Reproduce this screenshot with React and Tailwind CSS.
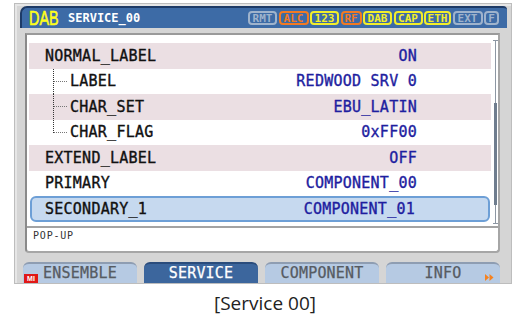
import React from "react";

const MONO = { fontFamily: '"DejaVu Sans Mono", "Liberation Mono", monospace' };

const rows = [
  { label: "NORMAL_LABEL", value: "ON", pink: true },
  { label: "LABEL", value: "REDWOOD SRV 0", child: "mid" },
  { label: "CHAR_SET", value: "EBU_LATIN", pink: true, child: "mid" },
  { label: "CHAR_FLAG", value: "0xFF00", child: "last" },
  { label: "EXTEND_LABEL", value: "OFF", pink: true },
  { label: "PRIMARY", value: "COMPONENT_00" },
  { label: "SECONDARY_1", value: "COMPONENT_01", selected: true },
];

const badges = [
  { t: "RMT", c: "#9fb3cc", w: 29 },
  { t: "ALC", c: "#f27a22", w: 30 },
  { t: "123", c: "#f2ee2a", w: 29 },
  { t: "RF", c: "#f27a22", w: 21 },
  { t: "DAB", c: "#f2ee2a", w: 29 },
  { t: "CAP", c: "#f2ee2a", w: 29 },
  { t: "ETH", c: "#f2ee2a", w: 27 },
  { t: "EXT", c: "#9fb3cc", w: 30 },
  { t: "F", c: "#9fb3cc", w: 15 },
];

function Tree({ kind }) {
  return (
    <svg width="17" height="25.5" className="shrink-0 block">
      <line
        x1="0.5"
        y1="0"
        x2="0.5"
        y2={kind === "last" ? 13 : 25.5}
        stroke="#333"
        strokeWidth="1"
        strokeDasharray="1 1"
      />
      <line x1="1" y1="12.5" x2="15" y2="12.5" stroke="#777" strokeWidth="1" strokeDasharray="1 1" />
    </svg>
  );
}

function Row({ r }) {
  const base =
    "h-[25.5px] flex items-center justify-between pr-[74px] text-[15px] tracking-[0.25px] [-webkit-text-stroke:0.35px]";
  const bg = r.selected
    ? "bg-[#c6d9ef] border-2 border-[#6d9fd6] rounded-[6px] ml-[1px] mr-[1px]"
    : r.pink
    ? "bg-[#ebdfe3]"
    : "bg-white";
  return (
    <div className={`${base} ${bg}`} style={MONO}>
      <div className={`flex items-center h-full ${r.child ? "pl-[24px]" : r.selected ? "pl-[13px]" : "pl-[16px]"}`}>
        {r.child && <Tree kind={r.child} />}
        <span className="text-[#111]">{r.label}</span>
      </div>
      <span className={`text-[#1e1ea0] ${r.selected ? "-mr-[1px]" : ""}`}>{r.value}</span>
    </div>
  );
}

function Tab({ label, active, mi, info }) {
  return (
    <div
      className={`relative flex-1 h-[21px] rounded-t-[6px] flex items-center justify-center text-[15px] tracking-[0.2px] [-webkit-text-stroke:0.25px] ${
        active
          ? "bg-[#3c669d] text-white border-t-2 border-[#2a4c7c]"
          : "bg-[#b6cae3] text-[#565b62] border-t-2 border-[#8e9db2]"
      }`}
      style={MONO}
    >
      {mi && (
        <div className="absolute left-[1px] bottom-0 w-[14px] h-[9px] bg-[#e01818] flex items-center justify-center text-white text-[7px] font-bold leading-none [-webkit-text-stroke:0px]" style={{ fontFamily: '"Liberation Sans", sans-serif' }}>
          MI
        </div>
      )}
      <span>{label}</span>
      {info && (
        <svg width="9" height="7" className="absolute right-[6px] top-[10px]" viewBox="0 0 9 7">
          <polygon points="0,0 4,3.5 0,7" fill="#f58220" />
          <polygon points="4.5,0 8.5,3.5 4.5,7" fill="#f58220" />
        </svg>
      )}
    </div>
  );
}

export default function App() {
  return (
    <div className="w-[530px] h-[329px] bg-white overflow-hidden flex flex-col">
      <div className="ml-[14px] mt-[3px] w-[498px] h-[281px] bg-[#d5d5d5] shadow-[inset_0_0_0_1px_#bdbdbd,inset_2px_2px_0_1px_#e6e6e6] flex flex-col pt-[3px] overflow-hidden">
        {/* Header */}
        <div className="ml-[6px] mr-[5px] h-[22px] bg-[#3d6ba6] rounded-tl-[7px] rounded-tr-[4px] border-t-2 border-l-2 border-[#1d3a66] flex items-center pl-[7px] pr-[8px]">
          <span className="text-[#ffff1a] text-[20px] leading-none [-webkit-text-stroke:0.6px]" style={{ fontFamily: '"Liberation Sans", Arial, sans-serif', transform: "scaleX(0.72)", transformOrigin: "left center", display: "inline-block", width: "29px" }}>
            DAB
          </span>
          <span className="ml-[10px] text-white text-[12px] font-bold leading-none" style={MONO}>
            SERVICE_00
          </span>
          <div className="ml-auto flex items-center gap-[1.5px]">
            {badges.map((b) => (
              <div
                key={b.t}
                className="h-[14px] rounded-[4px] border-2 flex items-center justify-center text-[11px] font-bold leading-none"
                style={{ ...MONO, borderColor: b.c, color: b.c, width: b.w }}
              >
                {b.t}
              </div>
            ))}
          </div>
        </div>

        {/* Content panel */}
        <div className="mt-[5px] ml-[11px] mr-[12px] h-[220px] bg-white border-2 border-[#a6a6a6] border-l-[#8a8a8a] border-t-[#9a9a9a] rounded-b-[4px] flex flex-col">
          <div className="h-[191px] flex">
            <div className="w-[462px] ml-[2px] pt-[8px] flex flex-col">
              {rows.map((r) => (
                <Row key={r.label} r={r} />
              ))}
            </div>
            <div className="flex-1 relative">
              <div className="absolute left-[4px] top-[5px] w-[1px] h-[184px] bg-[#8d97a3]" />
              <div className="absolute left-[2px] top-[5px] w-[5px] h-[1px] bg-[#8d97a3]" />
              <div className="absolute left-[2px] top-[188px] w-[5px] h-[1px] bg-[#8d97a3]" />
              <div className="absolute left-[3px] top-[68px] w-[3px] h-[102px] bg-[#6f7d8e]" />
            </div>
          </div>
          <div className="h-[2px] bg-[#a3a3a3]" />
          <div className="pl-[6px] pt-[2px] text-[10px] leading-[12px] text-[#333] tracking-[0.8px]" style={MONO}>
            POP-UP
          </div>
        </div>

        {/* Tabs */}
        <div className="mt-[9px] ml-[9px] mr-[12px] flex gap-[7px]">
          <Tab label="ENSEMBLE" mi />
          <Tab label="SERVICE" active />
          <Tab label="COMPONENT" />
          <Tab label="INFO" info />
        </div>
      </div>

      <div className="flex-1 flex items-center justify-center pb-[6px]">
        <span className="text-[19px] text-[#222] leading-none" style={{ fontFamily: '"Open Sans", sans-serif' }}>
          [Service 00]
        </span>
      </div>
    </div>
  );
}
